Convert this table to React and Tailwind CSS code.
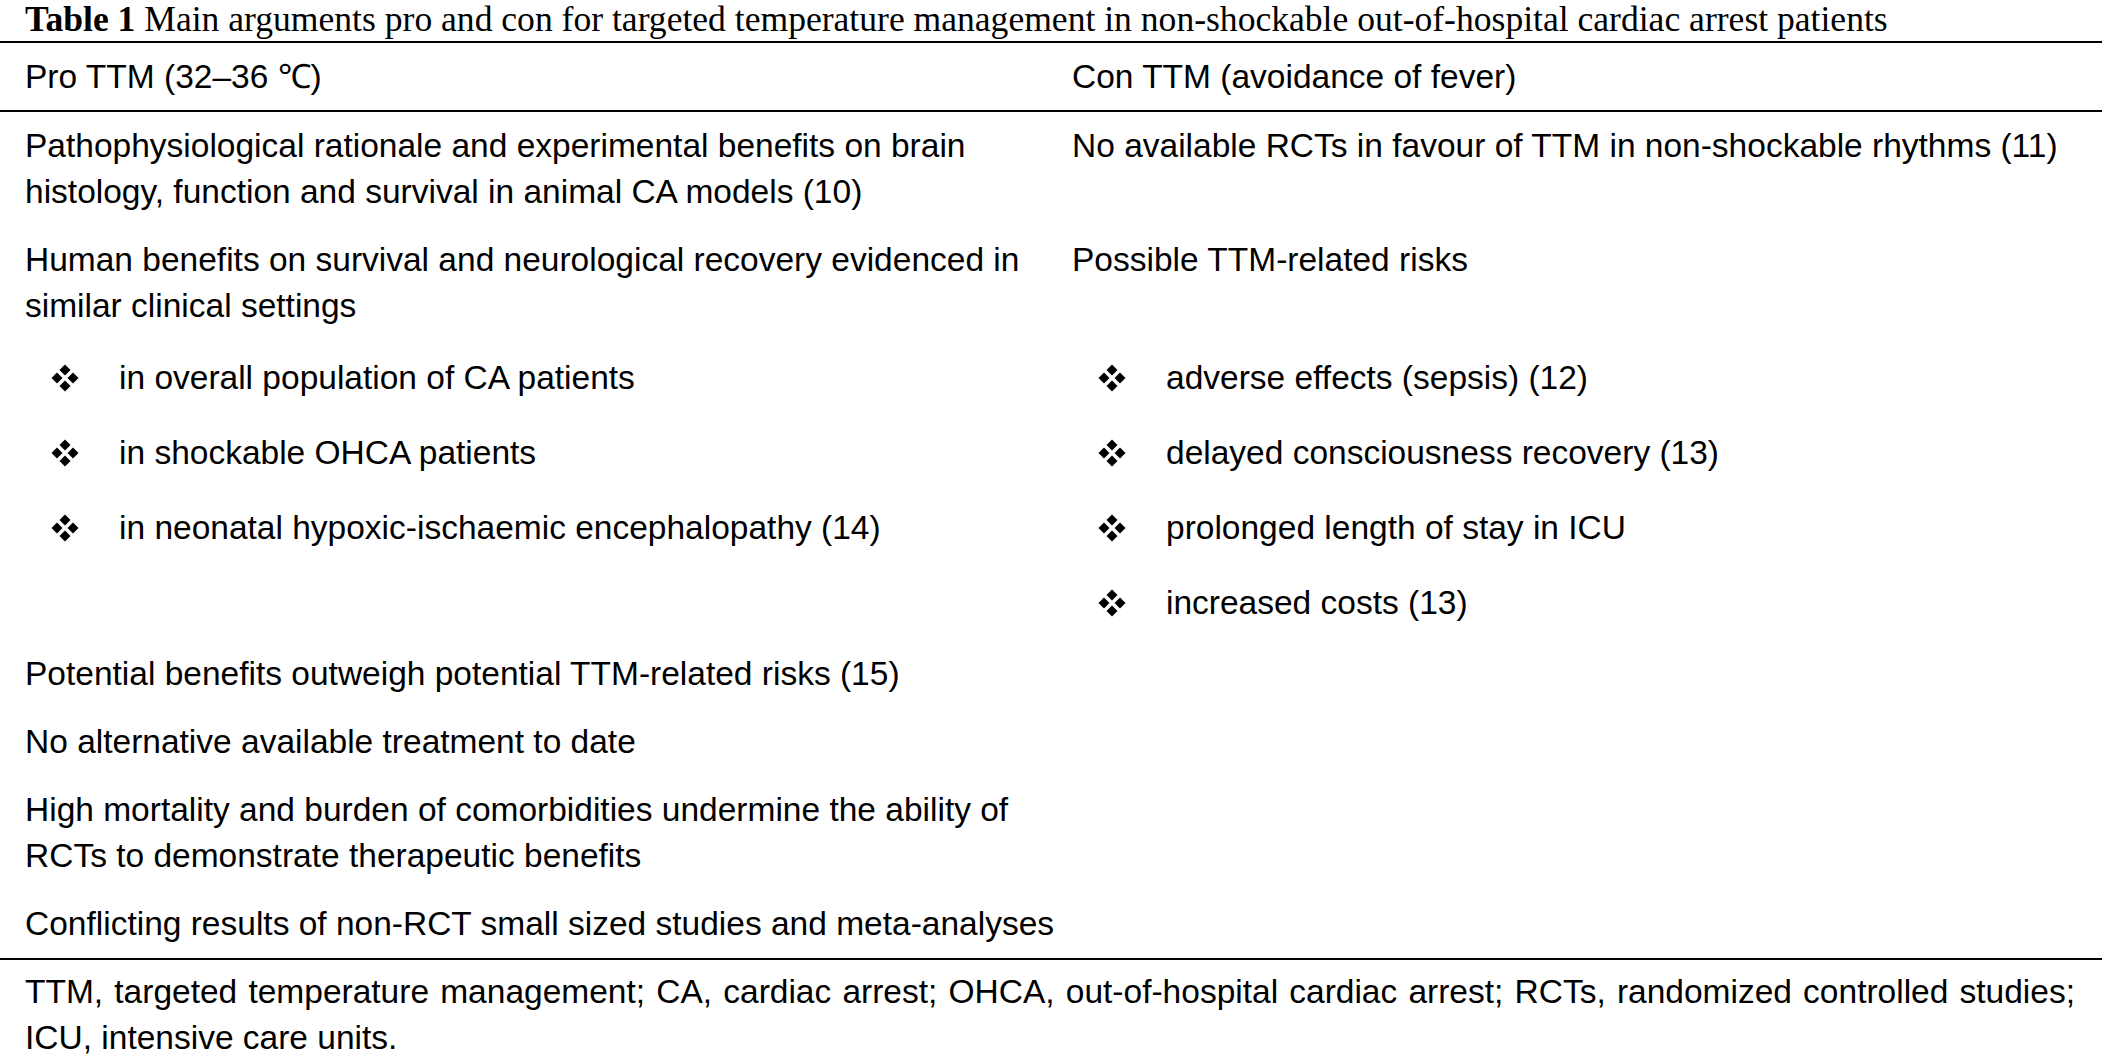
const sans = { fontFamily: '"Liberation Sans", Arial, Helvetica, sans-serif' };

function Bullet() {
  return (
    <span className="flex w-[94px] shrink-0 items-center">
      <svg className="ml-[26px]" width="28" height="28" viewBox="0 0 28 28" fill="black">
        <path d="M14 0.5 L19.5 6 L14 11.5 L8.5 6 Z" />
        <path d="M6 8.5 L11.5 14 L6 19.5 L0.5 14 Z" />
        <path d="M22 8.5 L27.5 14 L22 19.5 L16.5 14 Z" />
        <path d="M14 16.5 L19.5 22 L14 27.5 L8.5 22 Z" />
      </svg>
    </span>
  );
}

function Cell({ children, bullet, right }) {
  return (
    <div className={right ? 'pl-0' : 'pl-[25px]'}>
      {bullet ? (
        <div className="flex items-center whitespace-nowrap">
          <Bullet />
          <span>{children}</span>
        </div>
      ) : (
        <div className="whitespace-nowrap">{children}</div>
      )}
    </div>
  );
}

const rows = [
  { pro: <>Pathophysiological rationale and experimental benefits on brain<br />histology, function and survival in animal CA models (10)</>, con: 'No available RCTs in favour of TTM in non-shockable rhythms (11)' },
  { pro: <>Human benefits on survival and neurological recovery evidenced in<br />similar clinical settings</>, con: 'Possible TTM-related risks' },
  { pro: 'in overall population of CA patients', con: 'adverse effects (sepsis) (12)', bullet: true },
  { pro: 'in shockable OHCA patients', con: 'delayed consciousness recovery (13)', bullet: true },
  { pro: 'in neonatal hypoxic-ischaemic encephalopathy (14)', con: 'prolonged length of stay in ICU', bullet: true },
  { pro: null, con: 'increased costs (13)', bullet: true },
  { pro: 'Potential benefits outweigh potential TTM-related risks (15)', con: null },
  { pro: 'No alternative available treatment to date', con: null },
  { pro: <>High mortality and burden of comorbidities undermine the ability of<br />RCTs to demonstrate therapeutic benefits</>, con: null },
  { pro: 'Conflicting results of non-RCT small sized studies and meta-analyses', con: null },
];

export default function App() {
  return (
    <div className="min-h-screen w-[2102px] overflow-hidden bg-white text-black">
      <div
        className="h-[41px] pl-[25px] text-[35.6px] leading-[38px] whitespace-nowrap"
        style={{ fontFamily: '"Liberation Serif", "Times New Roman", serif' }}
      >
        <span className="font-bold">Table 1</span> Main arguments pro and con for targeted temperature management in non-shockable out-of-hospital cardiac arrest patients
      </div>

      <div className="border-t-2 border-black text-[33.5px] leading-[46px]" style={sans}>
        <div className="grid h-[67px] grid-cols-[1072px_1fr] items-center">
          <div className="pl-[25px]">Pro TTM (32–36 ℃)</div>
          <div>Con TTM (avoidance of fever)</div>
        </div>

        <div className="border-t-2 border-black">
          {rows.map((r, i) => (
            <div
              key={i}
              className={
                'grid grid-cols-[1072px_1fr] ' +
                (r.bullet ? 'pt-[15px] pb-[14px]' : 'pt-[11px] pb-[11px]')
              }
            >
              {r.pro ? <Cell bullet={r.bullet}>{r.pro}</Cell> : <div />}
              {r.con ? <Cell bullet={r.bullet} right>{r.con}</Cell> : <div />}
            </div>
          ))}
        </div>

        <div className="border-t-2 border-black pt-[9px] pl-[25px] pr-[27px] text-justify">
          TTM, targeted temperature management; CA, cardiac arrest; OHCA, out-of-hospital cardiac arrest; RCTs, randomized controlled studies; ICU, intensive care units.
        </div>
      </div>
    </div>
  );
}
